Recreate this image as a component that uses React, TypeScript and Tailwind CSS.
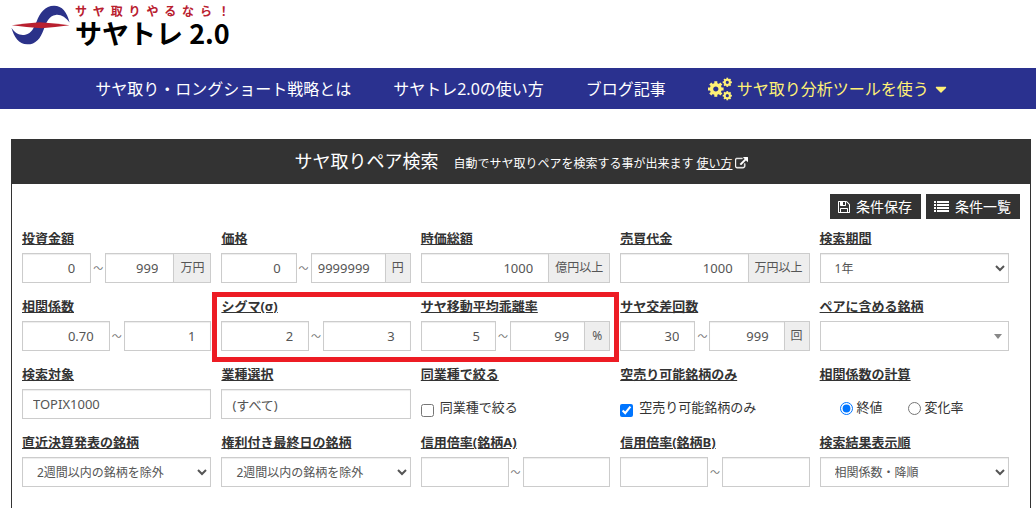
import React from 'react';
import { FaCaretDown } from 'react-icons/fa';

interface FieldProps {
  label: string;
  htmlFor?: string;
  children: React.ReactNode;
}

interface RangeProps {
  id: string;
  label: string;
  min?: string;
  max?: string;
  unit?: string;
}

interface SelectProps {
  id: string;
  label: string;
  options: string[];
}

const inputClass =
  'h-[30px] w-full min-w-0 flex-1 border border-[#ccc] bg-white pl-[6px] pr-[15px] text-right text-[13px] text-[#555] shadow-[inset_0_1px_1px_rgba(0,0,0,0.075)] outline-none';
const textClass =
  'block h-[30px] w-full border border-[#ccc] bg-white px-[10px] text-[13px] text-[#555] shadow-[inset_0_1px_1px_rgba(0,0,0,0.075)] outline-none';
const selectClass =
  'block h-[30px] w-full border border-[#ccc] bg-white px-[10px] text-[12px] text-[#555] shadow-[inset_0_1px_1px_rgba(0,0,0,0.075)] outline-none';
const buttonClass = 'flex h-[25px] items-center gap-[6px] bg-[#333] pr-[9px] pl-2';

function Field({ label, htmlFor, children }: FieldProps) {
  return (
    <div className="flex min-w-0 flex-col gap-[5px]">
      <label htmlFor={htmlFor} className="text-[13px] leading-5 font-bold underline">
        {label}
      </label>
      {children}
    </div>
  );
}

function Unit({ children }: { children: React.ReactNode }) {
  return (
    <span className="flex h-[30px] min-w-[25px] items-center justify-center border border-l-0 border-[#ccc] bg-[#eee] px-[6px] text-[12px] whitespace-nowrap text-[#555]">
      {children}
    </span>
  );
}

function RangeField({ id, label, min = '', max = '', unit }: RangeProps) {
  return (
    <Field label={label} htmlFor={id}>
      <div className="flex items-center">
        <input id={id} type="text" defaultValue={min} className={inputClass} />
        <span className="flex w-[14px] justify-center text-[10px] leading-none text-[#777]">～</span>
        <input type="text" aria-label={label} defaultValue={max} className={inputClass} />
        {unit && <Unit>{unit}</Unit>}
      </div>
    </Field>
  );
}

function AmountField({ id, label, unit }: { id: string; label: string; unit: string }) {
  return (
    <Field label={label} htmlFor={id}>
      <div className="flex">
        <input id={id} type="text" defaultValue="1000" className={inputClass} />
        <Unit>{unit}</Unit>
      </div>
    </Field>
  );
}

function SelectField({ id, label, options }: SelectProps) {
  return (
    <Field label={label} htmlFor={id}>
      <select id={id} className={selectClass}>
        {options.map((option) => (
          <option key={option}>{option}</option>
        ))}
      </select>
    </Field>
  );
}

function Logo() {
  return (
    <a href="#" className="flex items-start gap-[5px]">
      <svg viewBox="33 15 178 121" className="mt-[5px] h-10 w-[59px]" aria-hidden="true">
        <path
          fill="#2b3289"
          d="M34 84 C46 102 60 108 76 105 C96 101 102 84 110 66 C120 38 136 17 163 17 C188 17 202 36 210 68 C198 52 184 43 168 45 C148 48 140 66 132 88 C122 116 108 134 82 134 C56 134 42 112 34 84Z"
        />
        <path fill="#b9202f" d="M35 76 Q80 70 120 67 Q165 70 210 76 Q165 82 125 85 Q80 82 35 76Z" />
      </svg>
      <span className="flex flex-col font-['Noto_Sans_CJK_JP',sans-serif] font-bold">
        <span className="mt-[2px] text-[12px] leading-[18px] text-[#b9202f] [text-align-last:justify]">サヤ取りやるなら！</span>
        <span className="text-[27px] leading-[26px] text-black">サヤトレ 2.0</span>
      </span>
    </a>
  );
}

interface GearProps {
  x: number;
  y: number;
  r: number;
  ring: number;
  tooth: number;
  reach: number;
}

function Gear({ x, y, r, ring, tooth, reach }: GearProps) {
  return (
    <g transform={`translate(${x} ${y})`}>
      <circle r={r} fill="none" stroke="currentColor" strokeWidth={ring} />
      {[0, 45, 90, 135, 180, 225, 270, 315].map((angle) => (
        <rect key={angle} x={-tooth / 2} y={-reach} width={tooth} height={reach - r} fill="currentColor" transform={`rotate(${angle})`} />
      ))}
    </g>
  );
}

function CogsIcon() {
  return (
    <svg viewBox="0 0 24 24" className="mr-[5px] h-6 w-6" aria-hidden="true">
      <Gear x={7.8} y={12} r={4.3} ring={3.4} tooth={3} reach={7.8} />
      <Gear x={19.3} y={5.3} r={2.6} ring={2} tooth={1.8} reach={4.6} />
      <Gear x={19.3} y={18.7} r={2.6} ring={2} tooth={1.8} reach={4.6} />
    </svg>
  );
}

function SaveIcon() {
  return (
    <svg viewBox="128 128 1536 1536" className="h-3 w-3" fill="currentColor" aria-hidden="true">
      <path d="M512 1536h768v-384h-768v384zm896 0h128v-896q0-14-10-38.5t-20-34.5l-281-281q-10-10-34-20t-39-10v416q0 40-28 68t-68 28h-576q-40 0-68-28t-28-68v-416h-128v1280h128v-416q0-40 28-68t68-28h832q40 0 68 28t28 68v416zm-384-928v-320q0-13-9.5-22.5t-22.5-9.5h-192q-13 0-22.5 9.5t-9.5 22.5v320q0 13 9.5 22.5t22.5 9.5h192q13 0 22.5-9.5t9.5-22.5zm640 32v928q0 40-28 68t-68 28h-1344q-40 0-68-28t-28-68v-1344q0-40 28-68t68-28h928q40 0 88 20t76 48l280 280q28 28 48 76t20 88z" />
    </svg>
  );
}

function ExternalIcon() {
  return (
    <svg viewBox="0 0 1792 1792" className="h-[13px] w-[13px]" fill="currentColor" stroke="currentColor" strokeWidth="60" aria-hidden="true">
      <path d="M1408 928v320q0 119-84.5 203.5t-203.5 84.5h-832q-119 0-203.5-84.5t-84.5-203.5v-832q0-119 84.5-203.5t203.5-84.5h704q14 0 23 9t9 23v64q0 14-9 23t-23 9h-704q-66 0-113 47t-47 113v832q0 66 47 113t113 47h832q66 0 113-47t47-113v-320q0-14 9-23t23-9h64q14 0 23 9t9 23zm384-864v512q0 26-19 45t-45 19-45-19l-176-176-652 652q-10 10-23 10t-23-10l-114-114q-10-10-10-23t10-23l652-652-176-176q-19-19-19-45t19-45 45-19h512q26 0 45 19t19 45z" />
    </svg>
  );
}

function ListIcon() {
  return (
    <svg viewBox="0 0 15 12" className="h-3 w-[15px]" fill="currentColor" aria-hidden="true">
      {[0, 3, 6, 9].map((y) => (
        <g key={y}>
          <rect x="0" y={y} width="2" height="2" />
          <rect x="3" y={y} width="12" height="2" />
        </g>
      ))}
    </svg>
  );
}

export default function App() {
  return (
    <div className="flex min-h-screen flex-col bg-white font-['Noto_Sans','Noto_Sans_CJK_JP',sans-serif] text-[#333]">
      <header className="h-[68px] pl-[11px]">
        <Logo />
      </header>

      <nav className="flex h-[41px] items-center justify-center gap-[42px] bg-[#2a318f] pl-[9px] text-[16px] whitespace-nowrap text-white">
        <a href="#">サヤ取り・ロングショート戦略とは</a>
        <a href="#">サヤトレ2.0の使い方</a>
        <a href="#">ブログ記事</a>
        <a href="#" className="flex items-center text-[#fff176]">
          <CogsIcon />
          サヤ取り分析ツールを使う
          <FaCaretDown className="ml-[3px] h-[18px] w-[18px]" />
        </a>
      </nav>

      <section className="mt-[30px] mr-[5px] ml-[11px] grow border-x border-[#333]">
        <div className="flex h-[45px] items-center justify-center bg-[#333] text-white">
          <h1 className="text-[18px]">サヤ取りペア検索</h1>
          <p className="mt-1 ml-[15px] text-[12px]">自動でサヤ取りペアを検索する事が出来ます</p>
          <a href="#" className="mt-1 ml-[3px] flex items-center gap-[2px] text-[12px]">
            <span className="underline">使い方</span>
            <ExternalIcon />
          </a>
        </div>

        <div className="flex justify-end gap-[5px] px-[10px] pt-[10px] text-[14px] text-white">
          <button type="button" className={buttonClass}>
            <SaveIcon />
            条件保存
          </button>
          <button type="button" className={buttonClass}>
            <ListIcon />
            条件一覧
          </button>
        </div>

        <form className="relative mt-[9px] mr-[21px] ml-[10px] grid grid-cols-5 gap-x-[10px] gap-y-[13px]">
          <RangeField id="invest" label="投資金額" min="0" max="999" unit="万円" />
          <RangeField id="price" label="価格" min="0" max="9999999" unit="円" />
          <AmountField id="cap" label="時価総額" unit="億円以上" />
          <AmountField id="turnover" label="売買代金" unit="万円以上" />
          <SelectField id="period" label="検索期間" options={['1年']} />

          <RangeField id="correlation" label="相関係数" min="0.70" max="1" />
          <RangeField id="sigma" label="シグマ(σ)" min="2" max="3" />
          <RangeField id="deviation" label="サヤ移動平均乖離率" min="5" max="99" unit="%" />
          <RangeField id="cross" label="サヤ交差回数" min="30" max="999" unit="回" />
          <Field label="ペアに含める銘柄" htmlFor="pair">
            <div className="relative">
              <select id="pair" className="block h-[30px] w-full appearance-none border border-[#ccc] bg-white px-[10px] text-[12px] text-[#555] outline-none">
                <option value=""></option>
              </select>
              <svg viewBox="0 0 8 5" className="pointer-events-none absolute top-[13px] right-[7px] h-[5px] w-2" fill="#888" aria-hidden="true">
                <path d="M0 0h8L4 5z" />
              </svg>
            </div>
          </Field>

          <Field label="検索対象" htmlFor="target">
            <input id="target" type="text" defaultValue="TOPIX1000" className={textClass} />
          </Field>
          <Field label="業種選択" htmlFor="industry">
            <input id="industry" type="text" defaultValue="(すべて)" className={textClass} />
          </Field>
          <Field label="同業種で絞る" htmlFor="same">
            <div className="flex h-[30px] items-center gap-[6px] pt-2 text-[13px]">
              <input id="same" type="checkbox" className="mt-1 h-[13px] w-[13px]" />
              <label htmlFor="same">同業種で絞る</label>
            </div>
          </Field>
          <Field label="空売り可能銘柄のみ" htmlFor="short">
            <div className="flex h-[30px] items-center gap-[6px] pt-2 text-[13px]">
              <input id="short" type="checkbox" defaultChecked className="mt-1 h-[13px] w-[13px]" />
              <label htmlFor="short">空売り可能銘柄のみ</label>
            </div>
          </Field>
          <Field label="相関係数の計算" htmlFor="close">
            <div className="flex h-[30px] items-center gap-[25px] pt-2 pl-5 text-[13px]">
              <label className="flex items-center gap-1">
                <input id="close" type="radio" name="calc" defaultChecked className="h-[13px] w-[13px]" />
                終値
              </label>
              <label className="flex items-center gap-1">
                <input type="radio" name="calc" className="h-[13px] w-[13px]" />
                変化率
              </label>
            </div>
          </Field>

          <SelectField id="earnings" label="直近決算発表の銘柄" options={['2週間以内の銘柄を除外']} />
          <SelectField id="rights" label="権利付き最終日の銘柄" options={['2週間以内の銘柄を除外']} />
          <RangeField id="margin-a" label="信用倍率(銘柄A)" />
          <RangeField id="margin-b" label="信用倍率(銘柄B)" />
          <SelectField id="order" label="検索結果表示順" options={['相関係数・降順']} />

          {/* highlight around the sigma and deviation fields */}
          <div className="pointer-events-none absolute -top-1 -right-[9px] -bottom-[11px] -left-[9px] col-start-2 col-end-4 row-start-2 row-end-3 border-5 border-[#ed1c24]" />
        </form>
      </section>
    </div>
  );
}
